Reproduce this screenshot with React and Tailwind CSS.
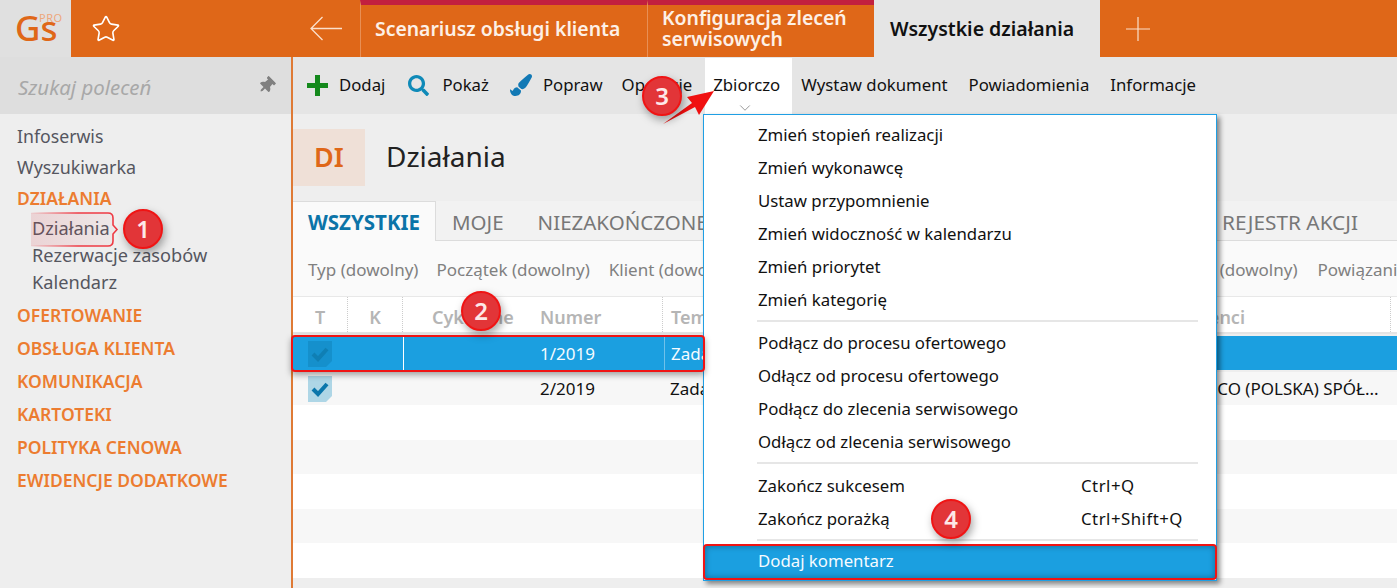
import { ChevronDown, Star } from 'lucide-react'
import { FaPaintBrush, FaSearch, FaThumbtack } from 'react-icons/fa'

const sideGroups = ['OFERTOWANIE', 'OBSŁUGA KLIENTA', 'KOMUNIKACJA', 'KARTOTEKI', 'POLITYKA CENOWA', 'EWIDENCJE DODATKOWE']

function Check({ dark }) {
  return (
    <svg width="24" height="26" viewBox="0 0 24 26" className="mt-px">
      <path d="M0 0H24V20L18 26H0Z" fill={dark ? '#1590cc' : '#aed6e6'} />
      <path d="M5 13L10 18L19 8" fill="none" stroke={dark ? '#0f7fb4' : '#0a76ab'} strokeWidth="4" />
    </svg>
  )
}

function Badge({ n, className }) {
  return (
    <div className={`absolute flex h-[40px] w-[40px] items-center justify-center rounded-full border-2 border-[#f01414] bg-[#e23538] text-[24px] font-semibold text-[#fde8e8] shadow-[2px_4px_8px_rgba(0,0,0,0.35)] ${className}`}>
      {n}
    </div>
  )
}

function MenuItem({ label, keys }) {
  return (
    <div className="flex h-[33px] items-center pl-[54px] text-[#111]">
      <span>{label}</span>
      {keys && <span className="absolute left-[377px] tracking-[0.5px]">{keys}</span>}
    </div>
  )
}

export default function App() {
  return (
    <div className="relative h-[588px] w-[1397px] overflow-hidden bg-white font-['Noto_Sans',sans-serif] text-[17px] leading-none">
      {/* gorny pasek */}
      <div className="flex h-[57px] bg-[#df6718] text-[#fdf0e6]">
        <div className="relative h-full w-[71px] bg-[#e0e0e0]">
          <span className="absolute left-[15px] top-[10px] text-[35px] font-medium text-[#df6718]">Gs</span>
          <span className="absolute left-[39px] top-[12px] text-[11px] tracking-[0.5px] text-[#eea77c]">PRO</span>
        </div>
        <div className="flex w-[70px] items-center justify-center">
          <Star size={30} strokeWidth={1.3} color="#fff" />
        </div>
        <div className="flex w-[219px] items-center justify-end pr-[18px]">
          <svg width="32" height="25" viewBox="0 0 32 25" fill="none" stroke="#fbe0cc" strokeWidth="1.3">
            <path d="M1 12.5H32M12.5 1L1 12.5L12.5 24" />
          </svg>
        </div>
        <div className="flex h-full w-[287px] items-center border-t-[5px] border-l border-t-[#c2203f] border-l-[#e88f55] pl-[14px] pb-[5px] text-[19.4px] font-semibold">
          Scenariusz obsługi klienta
        </div>
        <div className="flex h-full w-[227px] items-center border-t-[5px] border-l border-t-[#c2203f] border-l-[#e88f55] pl-[14px] text-[19.4px] font-semibold leading-[21px]">
          <span className="pb-[6px]">Konfiguracja zleceń<br />serwisowych</span>
        </div>
        <div className="flex h-full w-[226px] items-center bg-[#e5e5e5] pl-[16px] text-[19.5px] font-semibold text-[#111]">
          Wszystkie działania
        </div>
        <div className="flex w-[76px] items-center justify-center">
          <svg width="24" height="24" viewBox="0 0 24 24" stroke="#fbe0cc" strokeWidth="1.2">
            <path d="M0 12H24M12 0V24" />
          </svg>
        </div>
      </div>

      <div className="flex h-[531px]">
        {/* menu boczne */}
        <div className="w-[293px] shrink-0 border-r-2 border-[#df7a35] bg-[#eeeeee]">
          <div className="flex h-[57px] items-center justify-between bg-[#dedede] pl-[18px] pr-[16px]">
            <span className="pt-[3px] text-[20.4px] italic text-[#a8a8a8]">Szukaj poleceń</span>
            <FaThumbtack size={17} color="#808080" className="rotate-45" />
          </div>
          <div className="pl-[17px] pt-[6px] text-[#55565f]">
            <div className="flex h-[33px] items-center text-[17.7px]">Infoserwis</div>
            <div className="flex h-[30px] items-center text-[17.9px]">Wyszukiwarka</div>
            <div className="flex h-[32px] items-center pb-[1px] text-[17.5px] font-semibold text-[#ec7c30]">DZIAŁANIA</div>
            <div className="pl-[15px] text-[18.2px]">
              <div className="flex h-[27px] items-center">Działania</div>
              <div className="flex h-[27px] items-center">Rezerwacje zasobów</div>
              <div className="flex h-[27px] items-center">Kalendarz</div>
            </div>
            <div className="pt-[3px] text-[17.5px]">
              {sideGroups.map((g) => (
                <div key={g} className="flex h-[33px] items-center font-semibold text-[#ec7c30]">{g}</div>
              ))}
            </div>
          </div>
        </div>

        {/* czesc glowna */}
        <div className="min-w-0 flex-1 bg-[#eeeeee]">
          <div className="flex h-[57px] items-center bg-[#e5e5e5] pb-px pl-[14px] text-[16.75px] text-[#111]">
            <span className="flex items-center gap-[11px]">
              <svg width="21" height="21" viewBox="0 0 21 21"><path d="M8 0h5v8h8v5h-8v8H8v-8H0V8h8z" fill="#14891c" /></svg>
              Dodaj
            </span>
            <span className="ml-[23px] flex items-center gap-[13px]">
              <FaSearch size={21} color="#0f8ab8" />
              Pokaż
            </span>
            <span className="ml-[21px] flex items-center gap-[11px]">
              <FaPaintBrush size={22} color="#1279b5" />
              Popraw
            </span>
            <span className="ml-[19px]">Operacje</span>
            <span className="relative ml-[13px] -mb-px flex h-full w-[87px] shrink-0 items-center bg-white pb-px pl-[8px]">
              Zbiorczo
              <ChevronDown size={18} strokeWidth={1} color="#777" className="absolute left-[31px] top-[41px]" />
            </span>
            <span className="ml-[9px]">Wystaw dokument</span>
            <span className="ml-[21px]">Powiadomienia</span>
            <span className="ml-[21px]">Informacje</span>
          </div>

          <div className="flex items-center pt-[15px]">
            <div className="flex h-[57px] w-[72px] items-center justify-center bg-[#efe0d7] pb-[3px] text-[27px] font-semibold text-[#df6718]">DI</div>
            <span className="ml-[21px] pb-[3px] text-[28px] text-[#222]">Działania</span>
          </div>

          <div className="mt-[15px] flex h-[40px] items-center border-b border-[#dcdcdc] bg-[#f2f2f2] pt-[3px] text-[20.5px] text-[#777]">
            <div className="-mt-[3px] flex h-[40px] w-[143px] items-center justify-center border-t border-r border-[#dcdcdc] bg-[#fafafa] pt-[3px] font-bold text-[#0b74a8]">WSZYSTKIE</div>
            <span className="ml-[16px]">MOJE</span>
            <span className="ml-[34px]">NIEZAKOŃCZONE</span>
            <span className="ml-auto mr-[39px] text-[20.8px]">REJESTR AKCJI</span>
          </div>

          <div className="flex h-[56px] items-center justify-between overflow-hidden border-b border-[#e8e8e8] bg-[#fafafa] pl-[15px] pt-[2px] text-[#808080]">
            <div className="flex gap-[19px]">
              <span>Typ (dowolny)</span>
              <span className="-ml-px">Początek (dowolny)</span>
              <span>Klient (dowolny)</span>
            </div>
            <div className="flex gap-[20px] whitespace-nowrap">
              <span>Status (dowolny)</span>
              <span className="-mr-[10px]">Powiązania</span>
            </div>
          </div>

          <div className="grid h-[37px] grid-cols-[55px_55px_129px_131px_492px_236px_6px] items-center border-b-2 border-[#e4e4e4] bg-white text-[18px] font-semibold text-[#b5b5b5]">
            <span className="flex h-full items-center justify-center border-r border-dotted border-[#ccc] pt-[4px]">T</span>
            <span className="flex h-full items-center justify-center border-r border-dotted border-[#ccc] pt-[4px]">K</span>
            <span className="pl-[29px] pt-[4px]">Cykliczne</span>
            <span className="flex h-full items-center border-r border-dotted border-[#ccc] pl-[8px] pt-[4px]">Numer</span>
            <span className="pl-[8px] pt-[4px]">Temat</span>
            <span className="flex h-full items-center justify-end border-r border-dotted border-[#ccc] pr-[145px] pt-[4px]">Kontrahenci</span>
          </div>

          <div className="mt-[2px] grid h-[34px] grid-cols-[111px_128px_133px_1fr] items-center bg-[#1b9fe0] text-[#f5fbff]">
            <span className="flex h-full items-center border-r border-white pl-[15px]"><Check dark /></span>
            <span />
            <span className="flex h-full items-center border-r border-[#6fc1ea] pl-[8px]">1/2019</span>
            <span className="pl-[6px]">Zadanie</span>
          </div>
          <div className="mt-[2px] grid h-[33px] grid-cols-[111px_128px_132px_525px_1fr] items-center bg-[#f7f7f7] text-[#111]">
            <span className="pl-[15px]"><Check /></span>
            <span />
            <span className="pl-[8px]">2/2019</span>
            <span className="pl-[6px]">Zadanie</span>
            <span className="whitespace-nowrap">TESCO (POLSKA) SPÓŁ...</span>
          </div>
          <div className="h-[35px] bg-white" />
          <div className="h-[34px] bg-[#f7f7f7]" />
          <div className="h-[35px] bg-white" />
          <div className="h-[34px] bg-[#f7f7f7]" />
          <div className="h-[35px] bg-white" />
        </div>
      </div>

      {/* rozwijane menu */}
      <div className="absolute left-[703px] top-[114px] h-[467px] w-[514px] border border-[#1f9fe4] bg-white text-[16.8px] shadow-[3px_3px_5px_rgba(0,0,0,0.45)]">
        <div className="relative pt-[4px]">
          <MenuItem label="Zmień stopień realizacji" />
          <MenuItem label="Zmień wykonawcę" />
          <MenuItem label="Ustaw przypomnienie" />
          <MenuItem label="Zmień widoczność w kalendarzu" />
          <MenuItem label="Zmień priorytet" />
          <MenuItem label="Zmień kategorię" />
          <div className="mt-[3px] mb-[5px] ml-[53px] mr-[18px] h-[2px] bg-[#e6e6e6]" />
          <MenuItem label="Podłącz do procesu ofertowego" />
          <MenuItem label="Odłącz od procesu ofertowego" />
          <MenuItem label="Podłącz do zlecenia serwisowego" />
          <MenuItem label="Odłącz od zlecenia serwisowego" />
          <div className="mt-[3px] mb-[6px] ml-[53px] mr-[18px] h-[2px] bg-[#e6e6e6]" />
          <MenuItem label="Zakończ sukcesem" keys="Ctrl+Q" />
          <MenuItem label="Zakończ porażką" keys="Ctrl+Shift+Q" />
          <div className="mt-[3px] mb-[4px] ml-[53px] mr-[18px] h-[2px] bg-[#e6e6e6]" />
          <div className="flex h-[33px] items-center bg-[#1b9fe0] pl-[54px] text-[#f5fbff]">Dodaj komentarz</div>
        </div>
      </div>

      {/* adnotacje */}
      <svg className="absolute left-[31px] top-[212px]" width="92" height="36" viewBox="0 0 92 36">
        <defs>
          <linearGradient id="hl" x1="0" x2="1" y1="0" y2="0">
            <stop offset="0" stopColor="#ee3a44" stopOpacity="0.05" />
            <stop offset="0.55" stopColor="#ee3a44" stopOpacity="1" />
          </linearGradient>
          <linearGradient id="hlFill" x1="0" x2="1" y1="0" y2="0">
            <stop offset="0" stopColor="#dc3c46" stopOpacity="0.15" />
            <stop offset="1" stopColor="#dc3c46" stopOpacity="0.03" />
          </linearGradient>
        </defs>
        <path d="M0 1H77Q82 1 82 6V13L86 17.5L82 22V29Q82 34 77 34H0" fill="url(#hlFill)" stroke="url(#hl)" strokeWidth="1.6" />
      </svg>
      <div className="absolute left-[291px] top-[335px] h-[37px] w-[414px] rounded-[4px] border-2 border-[#f01414] shadow-[0_3px_6px_rgba(0,0,0,0.35)]" />
      <div className="absolute left-[703px] top-[544px] h-[36px] w-[514px] rounded-[4px] border-2 border-[#f01414] shadow-[inset_0_0_6px_rgba(0,0,0,0.35)]" />
      <svg className="absolute left-[660px] top-[88px]" width="58" height="40" viewBox="0 0 58 40">
        <path d="M3 36L32 15L27 9L54 3L39 27L35 19Z" fill="#f01010" />
      </svg>
      <Badge n="1" className="left-[123px] top-[209px]" />
      <Badge n="2" className="left-[461px] top-[291px]" />
      <Badge n="3" className="left-[642px] top-[76px]" />
      <Badge n="4" className="left-[931px] top-[499px]" />
    </div>
  )
}
